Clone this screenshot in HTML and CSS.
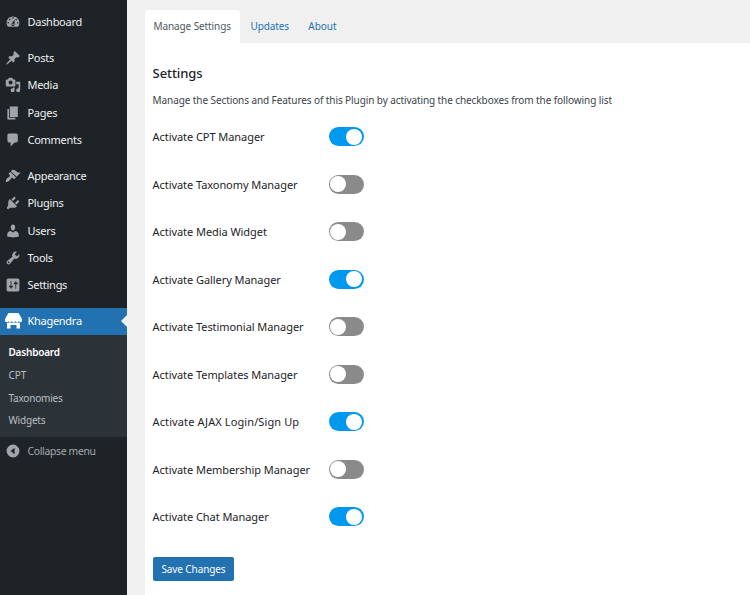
FILE: index.html
```html
<!DOCTYPE html>
<html lang="en">
<head>
<meta charset="utf-8">
<title>Settings</title>
<link rel="stylesheet" href="styles.css">
</head>
<body>
<div class="app">
  <nav class="sidebar">
    <ul class="menu">
      <li class="item"><svg class="icon" viewBox="0 0 20 20"><path fill-rule="evenodd" d="M3.76 16h12.48c1.1-1.37 1.76-3.11 1.76-5 0-4.42-3.58-8-8-8s-8 3.58-8 8c0 1.89.66 3.63 1.76 5zM10 4c.55 0 1 .45 1 1s-.45 1-1 1-1-.45-1-1 .45-1 1-1zM6 6c.55 0 1 .45 1 1s-.45 1-1 1-1-.45-1-1 .45-1 1-1zm8 0c.55 0 1 .45 1 1s-.45 1-1 1-1-.45-1-1 .45-1 1-1zm-5.370 5.550L12 7v6c0 1.100-.9 2-2 2s-2-.9-2-2c0-.57.24-1.080.63-1.450zM4 10c.55 0 1 .45 1 1s-.45 1-1 1-1-.45-1-1 .45-1 1-1zm12 0c.55 0 1 .45 1 1s-.45 1-1 1-1-.45-1-1 .45-1 1-1zm-5 3c0-.55-.45-1-1-1s-1 .45-1 1 .45 1 1 1 1-.45 1-1z"/></svg><span>Dashboard</span></li>
      <li class="item spaced"><svg class="icon" viewBox="0 0 20 20"><path d="M10.44 3.02l1.82-1.82 6.36 6.35-1.83 1.82c-1.05-.68-2.48-.57-3.41.36l-.75.75c-.92.93-1.04 2.35-.35 3.41l-1.83 1.82-2.41-2.41-2.8 2.79c-.42.42-3.38 2.71-3.8 2.29s1.86-3.39 2.28-3.81l2.79-2.79L4.1 9.36l1.83-1.82c1.05.69 2.48.57 3.4-.36l.75-.75c.93-.92 1.05-2.35.36-3.41z"/></svg><span>Posts</span></li>
      <li class="item"><svg class="icon" viewBox="0 0 20 20"><path fill-rule="evenodd" d="M13 11V4c0-.55-.45-1-1-1h-1.67L9 1H5L3.67 3H2c-.55 0-1 .45-1 1v7c0 .55.45 1 1 1h10c.55 0 1-.45 1-1zM7 4.5c1.38 0 2.5 1.12 2.5 2.5S8.38 9.5 7 9.5 4.5 8.38 4.5 7 5.62 4.5 7 4.5zM14 6h5v10.5c0 1.38-1.12 2.5-2.5 2.5S14 17.88 14 16.5s1.12-2.5 2.5-2.5c.17 0 .34.02.5.05V9h-3V6zm-4 8.05V13h2v3.5c0 1.38-1.12 2.5-2.5 2.5S7 17.88 7 16.5 8.12 14 9.5 14c.17 0 .34.02.5.05z"/></svg><span>Media</span></li>
      <li class="item"><svg class="icon" viewBox="0 0 20 20"><path d="M6 15V2h10v13H6zm-1 1h8v2H3V5h2v11z"/></svg><span>Pages</span></li>
      <li class="item"><svg class="icon" viewBox="0 0 20 20"><path d="M5 2h9c1.1 0 2 .9 2 2v7c0 1.1-.9 2-2 2h-2l-5 5v-5H5c-1.1 0-2-.9-2-2V4c0-1.1.9-2 2-2z"/></svg><span>Comments</span></li>
      <li class="item spaced"><svg class="icon" viewBox="0 0 20 20"><path d="M14.48 11.06L7.41 3.99l1.5-1.5c.5-.56 2.3-.47 3.51.32 1.21.8 1.43 1.28 2.91 2.1 1.18.64 2.45 1.26 4.45.85zm-.71.71L6.7 4.7 4.93 6.47c-.39.39-.39 1.02 0 1.41l1.06 1.06c.39.39.39 1.03 0 1.42-.6.6-1.43 1.11-2.21 1.69-.35.26-.7.53-1.01.84C1.43 14.23.4 16.08 1.4 17.07c.99 1 2.84-.03 4.18-1.36.31-.31.58-.66.85-1.02.57-.78 1.08-1.61 1.69-2.21.39-.39 1.02-.39 1.41 0l1.06 1.06c.39.39 1.02.39 1.41 0z"/></svg><span>Appearance</span></li>
      <li class="item"><svg class="icon" viewBox="0 0 20 20"><path d="M13.11 4.36L9.87 7.6 8 5.73l3.24-3.24c.35-.34 1.05-.2 1.56.32.52.51.66 1.21.31 1.55zm-8 1.77l.91-1.12 9.01 9.01-1.19.84c-.71.71-2.63 1.16-3.82 1.16H6.14L4.9 17.26c-.59.59-1.54.59-2.12 0-.59-.58-.59-1.53 0-2.12l1.24-1.24v-3.88c0-1.13.4-3.19 1.09-3.89zm7.26 3.97l3.24-3.24c.34-.35 1.04-.21 1.55.31.52.51.66 1.21.31 1.55l-3.24 3.25z"/></svg><span>Plugins</span></li>
      <li class="item"><svg class="icon" viewBox="0 0 20 20"><path d="M10 9.25c-2.27 0-2.73-3.44-2.73-3.44C7 4.02 7.82 2 9.97 2c2.16 0 2.98 2.02 2.71 3.81 0 0-.41 3.44-2.68 3.44zm0 2.57L12.72 10c2.39 0 4.52 2.33 4.52 4.53v2.49s-3.65 1.13-7.24 1.13c-3.65 0-7.24-1.13-7.24-1.13v-2.49c0-2.25 1.94-4.48 4.47-4.48z"/></svg><span>Users</span></li>
      <li class="item"><svg class="icon" viewBox="0 0 20 20"><path fill-rule="evenodd" d="M16.68 9.77c-1.34 1.34-3.3 1.67-4.95.99l-5.41 6.52c-.99.99-2.59.99-3.58 0s-.99-2.59 0-3.57l6.52-5.42c-.68-1.65-.35-3.61.99-4.95 1.28-1.28 3.12-1.62 4.72-1.06l-2.89 2.89 2.82 2.82 2.86-2.87c.53 1.58.18 3.39-1.08 4.65zM3.81 16.21c.4.39 1.04.39 1.43 0 .4-.4.4-1.04 0-1.43-.39-.4-1.03-.4-1.43 0-.39.39-.39 1.03 0 1.43z"/></svg><span>Tools</span></li>
      <li class="item"><svg class="icon" viewBox="0 0 20 20"><path fill-rule="evenodd" d="M18 16V4c0-1.1-.9-2-2-2H4c-1.1 0-2 .9-2 2v12c0 1.1.9 2 2 2h12c1.1 0 2-.9 2-2zM8 11h1c.55 0 1 .45 1 1s-.45 1-1 1H8v1.5c0 .28-.22.5-.5.5s-.5-.22-.5-.5V13H6c-.55 0-1-.45-1-1s.45-1 1-1h1V5.5c0-.28.22-.5.5-.5s.5.22.5.5V11zm5-2h-1c-.55 0-1-.45-1-1s.45-1 1-1h1V5.5c0-.28.22-.5.5-.5s.5.22.5.5V7h1c.55 0 1 .45 1 1s-.45 1-1 1h-1v5.5c0 .28-.22.5-.5.5s-.5-.22-.5-.5V9z"/></svg><span>Settings</span></li>
      <li class="item spaced current"><svg class="icon store" viewBox="0 0 17 16"><path d="M3.5 0h10L17 6v1.500a1.600 1.600 0 0 1-3.200.3 1.700 1.700 0 0 1-3.500 0 1.800 1.800 0 0 1-3.600 0 1.700 1.700 0 0 1-3.500 0A1.600 1.600 0 0 1 0 7.500V6zM2 9.800h13V15.500h-3.500v-3.500h-6v3.500H2z"/></svg><span>Khagendra</span></li>
    </ul>
    <ul class="submenu">
      <li class="active">Dashboard</li>
      <li class="cpt">CPT</li>
      <li>Taxonomies</li>
      <li>Widgets</li>
    </ul>
    <div class="item collapse"><svg class="icon" viewBox="0 0 20 20"><path fill-rule="evenodd" d="M10 2a8 8 0 1 1 0 16 8 8 0 0 1 0-16zM12 6v8l-5-4z"/></svg><span>Collapse menu</span></div>
  </nav>
  <main class="main">
    <div class="tabs">
      <a class="tab selected">Manage Settings</a>
      <a class="tab">Updates</a>
      <a class="tab about">About</a>
    </div>
    <section class="panel">
      <h1>Settings</h1>
      <p>Manage the Sections and Features of this Plugin by activating the checkboxes from the following list</p>
      <div class="rows">
        <div class="row"><span>Activate CPT Manager</span><i class="switch on"></i></div>
        <div class="row"><span>Activate Taxonomy Manager</span><i class="switch"></i></div>
        <div class="row"><span>Activate Media Widget</span><i class="switch"></i></div>
        <div class="row"><span>Activate Gallery Manager</span><i class="switch on"></i></div>
        <div class="row"><span>Activate Testimonial Manager</span><i class="switch"></i></div>
        <div class="row"><span>Activate Templates Manager</span><i class="switch"></i></div>
        <div class="row"><span class="wide">Activate AJAX Login/Sign Up</span><i class="switch on"></i></div>
        <div class="row"><span>Activate Membership Manager</span><i class="switch"></i></div>
        <div class="row"><span>Activate Chat Manager</span><i class="switch on"></i></div>
      </div>
      <button class="save">Save Changes</button>
    </section>
  </main>
</div>
</body>
</html>
```
FILE: styles.css
```css
* { box-sizing: border-box; }
body {
  margin: 0;
  background: #f0f0f1;
  font-family: "Noto Sans", sans-serif;
  font-size: 11px;
  color: #1d2327;
}
ul { list-style: none; margin: 0; padding: 0; }
.app { display: flex; width: 750px; height: 595px; overflow: hidden; }

.sidebar { width: 127px; flex: none; background: #1d2327; padding-top: 8.1px; }
.item {
  display: flex;
  align-items: center;
  height: 27.3px;
  padding-left: 5.3px;
  gap: 6.2px;
  color: #f0f0f1;
  white-space: nowrap;
}
.menu .item { letter-spacing: -0.28px; }
.menu .item span { padding-bottom: 1px; }
.item.spaced { margin-top: 8.9px; }
.icon { width: 16px; height: 16px; flex: none; fill: #a0a5aa; }
.current { background: #2271b1; color: #fff; position: relative; padding-left: 5px; gap: 5.5px; }
.current::after {
  content: "";
  position: absolute;
  right: 0;
  top: 7px;
  border: 6.5px solid transparent;
  border-left: 0;
  border-right-color: #f0f0f1;
}
.store { width: 17px; fill: #fff; }
.submenu {
  background: #2c3338;
  height: 102.4px;
  padding: 6.2px 0 0 8.5px;
  font-size: 10px;
  letter-spacing: -0.2px;
  color: #bcbfc2;
}
.submenu li { height: 22.7px; line-height: 22.7px; }
.submenu .active { color: #fff; font-weight: 600; }
.submenu .cpt { letter-spacing: 0; }
.collapse { color: #a7aaad; font-size: 10.4px; letter-spacing: -0.32px; }

.main { flex: 1; padding: 10px 0 0 18px; display: flex; flex-direction: column; }
.tabs { display: flex; height: 33px; font-size: 10px; letter-spacing: -0.1px; line-height: 33px; color: #2271b1; }
.tab { padding-left: 10.5px; white-space: nowrap; }
.tab.about { padding-left: 19.2px; letter-spacing: 0; }
.tab.selected { width: 95px; padding-left: 8.5px; background: #fff; border-radius: 4px 4px 0 0; color: #50575e; }
.panel { flex: 1; background: #fff; padding: 20px 0 0 7.6px; }
h1 { margin: 0; font-size: 13px; line-height: 20px; font-weight: 500; letter-spacing: -0.1px; }
p {
  margin: 8px 0 0;
  font-size: 10px;
  line-height: 18px;
  letter-spacing: -0.09px;
  color: #3c434a;
  white-space: nowrap;
}
.rows { margin-top: 4.2px; }
.row { display: flex; align-items: center; height: 47.5px; }
.row span { width: 176.4px; white-space: nowrap; letter-spacing: -0.06px; }
.row .wide { letter-spacing: 0.1px; }
.switch {
  width: 35px;
  height: 19px;
  border-radius: 10px;
  background: #8a8a8a;
  padding: 1.5px 2px 1.5px 1px;
  display: flex;
}
.switch::before { content: ""; width: 16px; height: 16px; border-radius: 50%; background: #fff; }
.switch.on { background: #0099ee; justify-content: flex-end; }
.save {
  display: block;
  margin: 16px 0 0 0.4px;
  width: 81px;
  height: 24px;
  padding: 0;
  border: 0;
  border-radius: 2px;
  background: #2271b1;
  color: #fff;
  font: 10px "Noto Sans", sans-serif;
  letter-spacing: -0.1px;
}
```
